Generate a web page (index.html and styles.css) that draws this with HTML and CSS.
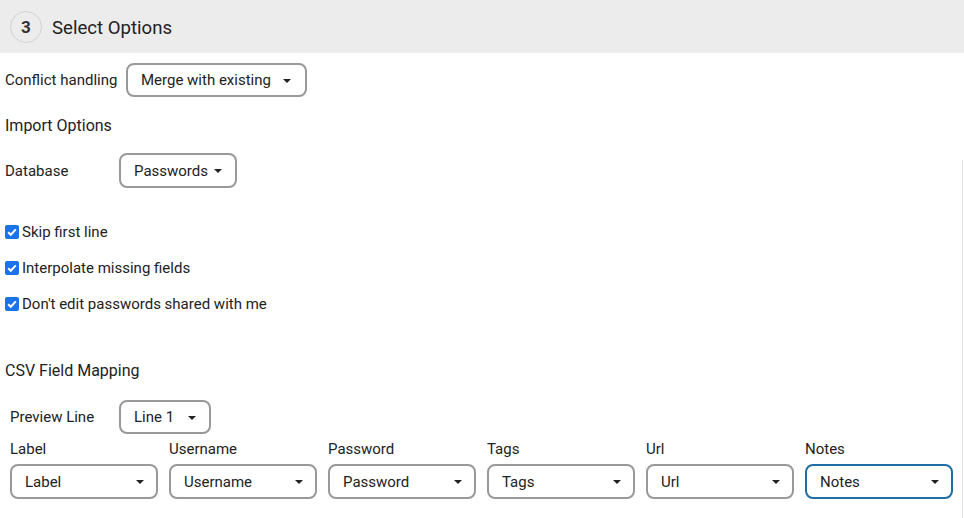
FILE: index.html
```html
<!DOCTYPE html>
<html>
<head>
<meta charset="utf-8">
<link rel="stylesheet" href="styles.css">
</head>
<body>
<div class="step-header">
  <span class="step-num">3</span>
  <span class="step-title">Select Options</span>
</div>
<div class="row conflict-row">
  <span class="row-label">Conflict handling</span>
  <div class="select sel-conflict"><span>Merge with existing</span><span class="caret"></span></div>
</div>
<div class="section-title import-title">Import Options</div>
<div class="options">
  <div class="row db-row">
    <span class="row-label db-label">Database</span>
    <div class="select sel-db"><span>Passwords</span><span class="caret"></span></div>
  </div>
  <div class="checks">
    <label class="check"><span class="box"><svg viewBox="0 0 14 14" width="14" height="14"><path d="M3.2 7.2 L5.8 9.8 L10.8 4.4" fill="none" stroke="#fff" stroke-width="2"/></svg></span>Skip first line</label>
    <label class="check"><span class="box"><svg viewBox="0 0 14 14" width="14" height="14"><path d="M3.2 7.2 L5.8 9.8 L10.8 4.4" fill="none" stroke="#fff" stroke-width="2"/></svg></span>Interpolate missing fields</label>
    <label class="check"><span class="box"><svg viewBox="0 0 14 14" width="14" height="14"><path d="M3.2 7.2 L5.8 9.8 L10.8 4.4" fill="none" stroke="#fff" stroke-width="2"/></svg></span>Don't edit passwords shared with me</label>
  </div>
  <div class="section-title csv-title">CSV Field Mapping</div>
  <div class="mapping">
    <div class="row preview-row">
      <span class="row-label preview-label">Preview Line</span>
      <div class="select sel-preview"><span>Line 1</span><span class="caret"></span></div>
    </div>
    <div class="fields">
      <div class="field"><div class="field-label">Label</div><div class="select sel-field"><span>Label</span><span class="caret"></span></div></div>
      <div class="field"><div class="field-label">Username</div><div class="select sel-field"><span>Username</span><span class="caret"></span></div></div>
      <div class="field"><div class="field-label">Password</div><div class="select sel-field"><span>Password</span><span class="caret"></span></div></div>
      <div class="field"><div class="field-label">Tags</div><div class="select sel-field"><span>Tags</span><span class="caret"></span></div></div>
      <div class="field"><div class="field-label">Url</div><div class="select sel-field"><span>Url</span><span class="caret"></span></div></div>
      <div class="field"><div class="field-label">Notes</div><div class="select sel-field focused"><span>Notes</span><span class="caret"></span></div></div>
    </div>
  </div>
</div>
</body>
</html>
```
FILE: styles.css
```css
html, body {
  margin: 0;
  padding: 0;
  background: #fff;
}
body {
  font-family: Roboto, "Liberation Sans", sans-serif;
  font-size: 15px;
  color: #222;
  width: 964px;
  height: 518px;
  overflow: hidden;
}
.step-header {
  height: 53px;
  background: #ececec;
  display: flex;
  align-items: center;
  padding-left: 10px;
  box-sizing: border-box;
}
.step-num {
  width: 30px;
  height: 30px;
  border: 1px solid #d2d2d2;
  border-radius: 50%;
  display: flex;
  align-items: center;
  justify-content: center;
  font-weight: 700;
  font-size: 17px;
  color: #333;
  margin-top: 1px;
}
.step-title {
  font-size: 18.6px;
  margin-left: 10px;
  margin-top: 2px;
  color: #222;
}
.row {
  display: flex;
  align-items: center;
}
.row-label {
  padding-left: 5px;
}
.conflict-row {
  margin-top: 10px;
}
.conflict-row .row-label {
  width: 121px;
}
.select {
  height: 34px;
  box-sizing: border-box;
  border: 2px solid #999;
  border-radius: 8px;
  display: flex;
  align-items: center;
  justify-content: space-between;
  padding: 0 14px 0 13px;
  background: #fff;
}
.caret {
  width: 0;
  height: 0;
  border-left: 4.5px solid transparent;
  border-right: 4.5px solid transparent;
  border-top: 4.5px solid #222;
  margin-top: 1px;
}
.sel-conflict {
  width: 181px;
}
.section-title {
  font-size: 16px;
  padding-left: 5px;
}
.import-title {
  margin-top: 19px;
  line-height: 20px;
}
.options {
  margin-top: 24px;
  margin-right: 1px;
  border-right: 1px solid #e3e3e3;
  padding-top: 1px;
}
.db-row {
  margin-top: -8px;
  height: 35px;
}
.db-label {
  width: 114px;
}
.sel-db {
  width: 118px;
  height: 35px;
  padding-right: 13px;
}
.checks {
  margin-top: 34px;
  display: flex;
  flex-direction: column;
  gap: 16px;
}
.check {
  display: flex;
  align-items: center;
  height: 20px;
  padding-left: 5px;
}
.box {
  width: 14px;
  height: 14px;
  border-radius: 2px;
  background: #1a73e8;
  margin-right: 3px;
  display: flex;
}
.csv-title {
  margin-top: 47px;
  line-height: 20px;
}
.mapping {
  padding-left: 10px;
  padding-bottom: 30px;
}
.preview-row {
  margin-top: 19px;
}
.preview-label {
  padding-left: 0;
  width: 109px;
}
.sel-preview {
  width: 92px;
  padding-right: 13px;
}
.fields {
  display: flex;
  gap: 11px;
  margin-top: 5px;
}
.field {
  width: 148px;
}
.field-label {
  line-height: 20px;
  margin-bottom: 5px;
}
.sel-field {
  width: 148px;
  height: 35px;
  padding-right: 12px;
}
.sel-field.focused {
  border-color: #1f6ea3;
}
```
